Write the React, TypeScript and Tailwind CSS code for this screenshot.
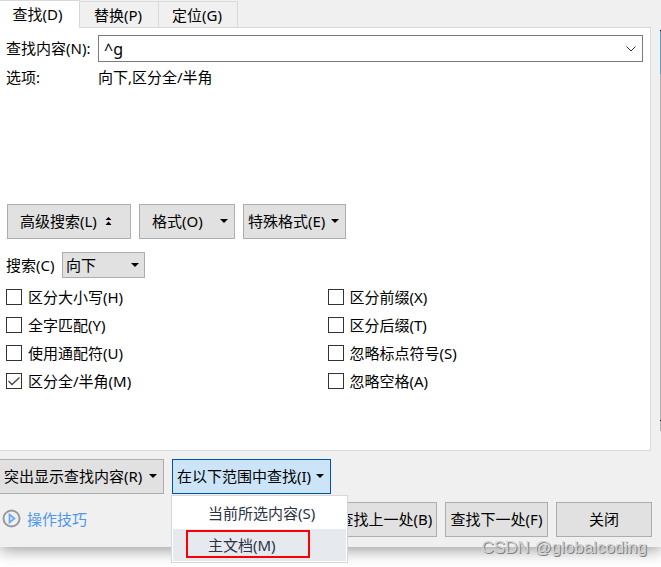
import { useState } from "react";
import clsx from "clsx";

const tabs = ["查找(D)", "替换(P)", "定位(G)"];

const leftOptions = [
  { id: "case", label: "区分大小写(H)", checked: false },
  { id: "word", label: "全字匹配(Y)", checked: false },
  { id: "wildcard", label: "使用通配符(U)", checked: false },
  { id: "width", label: "区分全/半角(M)", checked: true },
];

const rightOptions = [
  { id: "prefix", label: "区分前缀(X)", checked: false },
  { id: "suffix", label: "区分后缀(T)", checked: false },
  { id: "punctuation", label: "忽略标点符号(S)", checked: false },
  { id: "space", label: "忽略空格(A)", checked: false },
];

const buttonStyle =
  "flex h-[35px] shrink-0 items-center whitespace-nowrap border border-[#adadad] bg-[#e1e1e1] pb-0.5";

function Caret() {
  return (
    <svg width="8" height="4" viewBox="0 0 8 4" className="shrink-0">
      <path d="M0 0h8L4 4z" fill="#000" />
    </svg>
  );
}

function Option({ id, label, checked }: { id: string; label: string; checked: boolean }) {
  return (
    <label htmlFor={id} className="flex h-7 items-center gap-1.5">
      <span className="relative h-4 w-4">
        <input
          id={id}
          type="checkbox"
          defaultChecked={checked}
          className="peer block h-4 w-4 appearance-none border border-[#333333] bg-white"
        />
        <svg
          viewBox="0 0 16 16"
          className="pointer-events-none absolute inset-0 hidden h-4 w-4 peer-checked:block"
        >
          <path d="M2.500 8l3.500 3.500L13.500 4.500" fill="none" stroke="#444" strokeWidth="1.3" />
        </svg>
      </span>
      {label}
    </label>
  );
}

export default function App() {
  const [tab, setTab] = useState(tabs[0]);

  return (
    <div className="relative min-h-screen overflow-hidden bg-white font-['Noto_Sans','Noto_Sans_CJK_SC',sans-serif] text-[15px] leading-5 text-black">
      <div className="flex bg-[#f0f0f0] shadow-[0_2px_16px_rgba(0,0,0,0.45)]">
        <div className="min-w-0 flex-1 pb-2.5">
          <div role="tablist" className="flex items-end">
            {tabs.map((name) => (
              <button
                key={name}
                role="tab"
                aria-selected={tab === name}
                onClick={() => setTab(name)}
                className={clsx(
                  "border-t border-r border-[#d9d9d9]",
                  tab === name
                    ? "relative -mb-px h-7 w-20 bg-white pr-1 pb-0.5"
                    : "h-[26px] w-[79px] bg-[#f0f0f0] pr-0.5"
                )}
              >
                {name}
              </button>
            ))}
          </div>

          <div className="mr-[9px] border-t border-r border-b border-[#d9d9d9] bg-white pt-[7px] pr-[7px] pb-[55px] pl-[6px]">
            <div className="flex items-center">
              <label htmlFor="find" className="w-[92px] shrink-0 pb-0.5 whitespace-nowrap">
                查找内容(N):
              </label>
              <div className="flex h-[27px] min-w-0 flex-1 items-center border border-[#7a7a7a]">
                <input
                  id="find"
                  defaultValue="^g"
                  className="h-full min-w-0 flex-1 pl-[5px] text-[16px] outline-none"
                />
                <button aria-label="展开" className="flex h-full w-[22px] items-center justify-center">
                  <svg width="10" height="6" viewBox="0 0 10 6">
                    <path d="M.5 .5L5 5L9.500 .5" fill="none" stroke="#333" />
                  </svg>
                </button>
              </div>
            </div>
            <div className="mt-[5px] flex">
              <span className="w-[92px]">选项:</span>
              <span>向下,区分全/半角</span>
            </div>

            <div className="mt-[117px] flex gap-2 pl-px">
              <button className={clsx(buttonStyle, "w-[124px] gap-2 pl-3")}>
                高级搜索(L)
                <svg width="7" height="8" viewBox="0 0 7 8">
                  <path d="M3.500 0L6.500 3H.5zM3.500 4.500L6.500 8H.5z" fill="#000" />
                </svg>
              </button>
              <button className={clsx(buttonStyle, "w-24 justify-between pr-1.5 pl-3")}>
                格式(O)
                <Caret />
              </button>
              <button className={clsx(buttonStyle, "w-[103px] justify-between pr-1.5 pl-1")}>
                特殊格式(E)
                <Caret />
              </button>
            </div>

            <div className="mt-[13px] flex items-center">
              <label htmlFor="direction" className="w-14">
                搜索(C)
              </label>
              <div className="relative">
                <select
                  id="direction"
                  className="block h-[26px] w-[83px] appearance-none border border-[#adadad] bg-[#e1e1e1] pl-[3px]"
                >
                  <option>向下</option>
                  <option>向上</option>
                  <option>全部</option>
                </select>
                <span className="pointer-events-none absolute inset-y-0 right-1.5 flex items-center">
                  <Caret />
                </span>
              </div>
            </div>

            <div className="mt-[5px] grid grid-cols-2 gap-1.5">
              <div>
                {leftOptions.map((option) => (
                  <Option key={option.id} {...option} />
                ))}
              </div>
              <div>
                {rightOptions.map((option) => (
                  <Option key={option.id} {...option} />
                ))}
              </div>
            </div>
          </div>

          <div className="mt-2 flex gap-2">
            <button className={clsx(buttonStyle, "w-[164px] justify-between border-l-0 pr-1.5 pl-1")}>
              突出显示查找内容(R)
              <Caret />
            </button>
            <div className="relative">
              <button className="flex h-[35px] w-[159px] items-center justify-between border border-[#005499] bg-[#cce4f7] pr-1.5 pb-0.5 pl-1 whitespace-nowrap">
                在以下范围中查找(I)
                <Caret />
              </button>
              <div
                role="menu"
                className="absolute top-full -left-px z-10 mt-px w-[177px] border border-[#d5d8dc] bg-white p-px text-[#2b3245]"
              >
                <button role="menuitem" className="block h-8 w-full pl-[35px] text-left">
                  当前所选内容(S)
                </button>
                <button role="menuitem" className="relative block h-8 w-full bg-[#e6eaef] pl-[35px] text-left">
                  主文档(M)
                  <span className="absolute top-px left-[13px] h-7 w-[124px] border-2 border-[#fb0000]" />
                </button>
              </div>
            </div>
          </div>

          <div className="mt-2 flex items-center gap-2 pr-2">
            <a href="#tips" className="mr-auto flex items-center gap-1.5 pb-0.5 pl-0.5 text-[#4e97ef]">
              <svg width="19" height="19" viewBox="0 0 19 19">
                <circle cx="9.500" cy="9.500" r="8" fill="#f0f0f0" stroke="#999" strokeWidth="2" />
                <path d="M7.500 5.500v8l5-4z" fill="#d9eaff" stroke="#6ca8f2" strokeWidth="1.700" />
              </svg>
              操作技巧
            </a>
            <button className={clsx(buttonStyle, "w-[103px] justify-center")}>查找上一处(B)</button>
            <button className={clsx(buttonStyle, "w-[103px] justify-center")}>查找下一处(F)</button>
            <button className={clsx(buttonStyle, "w-24 justify-center")}>关闭</button>
          </div>
        </div>

        <div className="flex w-px flex-col pt-[30px]">
          <div className="h-px bg-black" />
          <div className="h-[43px] bg-[#5aa0c8]" />
          <div className="h-[346px] bg-[#b0b0b0]" />
          <div className="h-px bg-black" />
          <div className="h-2.5 bg-[#b0b0b0]" />
        </div>
      </div>

      <div className="pointer-events-none absolute right-[14px] bottom-[9px] font-['Liberation_Sans',sans-serif] text-[17px] text-[#d2d2d2] [text-shadow:1px_1px_0_#808080]">
        CSDN @globalcoding
      </div>
    </div>
  );
}
